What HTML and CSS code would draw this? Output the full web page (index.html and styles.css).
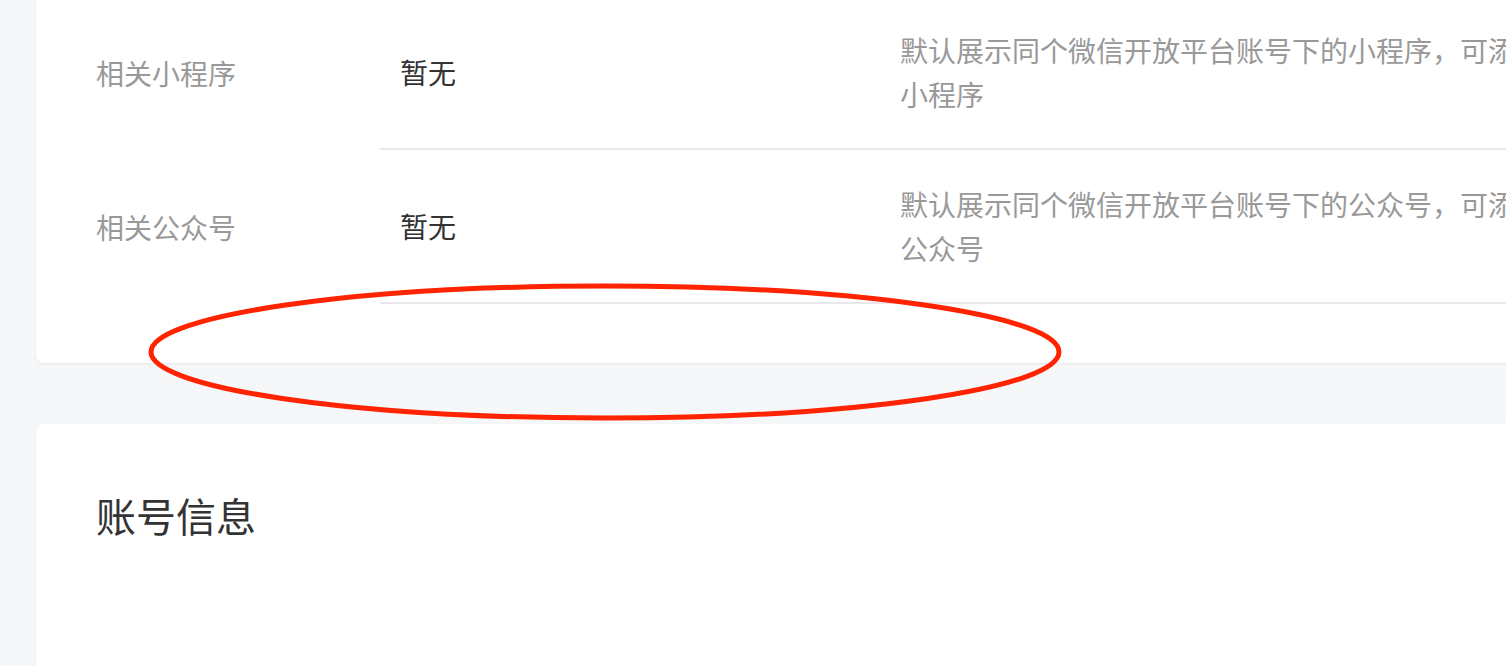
FILE: index.html
```html
<!DOCTYPE html>
<html lang="zh-CN">
<head>
<meta charset="utf-8">
<title>设置</title>
<link rel="stylesheet" href="styles.css">
</head>
<body>
<div class="main">
  <section class="card card-related">
    <div class="row">
      <div class="label">相关小程序</div>
      <div class="cell">
        <div class="value">暂无</div>
        <div class="desc">默认展示同个微信开放平台账号下的小程序，可添加其他关联的小程序</div>
      </div>
    </div>
    <div class="row">
      <div class="label">相关公众号</div>
      <div class="cell">
        <div class="value">暂无</div>
        <div class="desc">默认展示同个微信开放平台账号下的公众号，可添加其他关联的公众号</div>
      </div>
    </div>
  </section>
  <section class="card card-account">
    <h2 class="title">账号信息</h2>
  </section>
</div>
<svg class="mark" width="930" height="150" viewBox="0 0 930 150" aria-hidden="true">
  <ellipse cx="465" cy="75" rx="454" ry="66" fill="none" stroke="#ff2300" stroke-width="5"/>
</svg>
</body>
</html>
```
FILE: styles.css
```css
html, body {
  margin: 0;
  padding: 0;
  overflow: hidden;
  background: #f6f7f9;
}
body {
  font-family: "Noto Sans CJK SC", "Noto Sans", sans-serif;
  position: relative;
  height: 666px;
}
.main {
  width: 1900px;
  padding-left: 36px;
}
.card {
  background: #fff;
  border-radius: 8px;
  box-shadow: 0 1px 3px rgba(0, 0, 0, 0.07);
  padding-left: 60px;
}
.card-related {
  margin-top: -4px;
  padding-bottom: 59px;
}
.row {
  display: flex;
}
.label {
  width: 284px;
  flex: none;
  display: flex;
  align-items: center;
  font-size: 28px;
  color: #999;
}
.cell {
  flex: 1;
  display: flex;
  align-items: center;
  border-bottom: 2px solid #e8e8ec;
  padding: 32px 0;
}
.value {
  width: 520px;
  flex: none;
  box-sizing: border-box;
  padding-left: 20px;
  font-size: 28px;
  color: #333;
}
.desc {
  width: 790px;
  flex: none;
  font-size: 28px;
  line-height: 44px;
  color: #999;
}
.card-account {
  margin-top: 61px;
  height: 400px;
  padding-top: 60px;
}
.title {
  margin: 0;
  font-size: 40px;
  line-height: 62px;
  font-weight: 400;
  color: #333;
}
.mark {
  position: absolute;
  left: 140px;
  top: 277px;
}
```
